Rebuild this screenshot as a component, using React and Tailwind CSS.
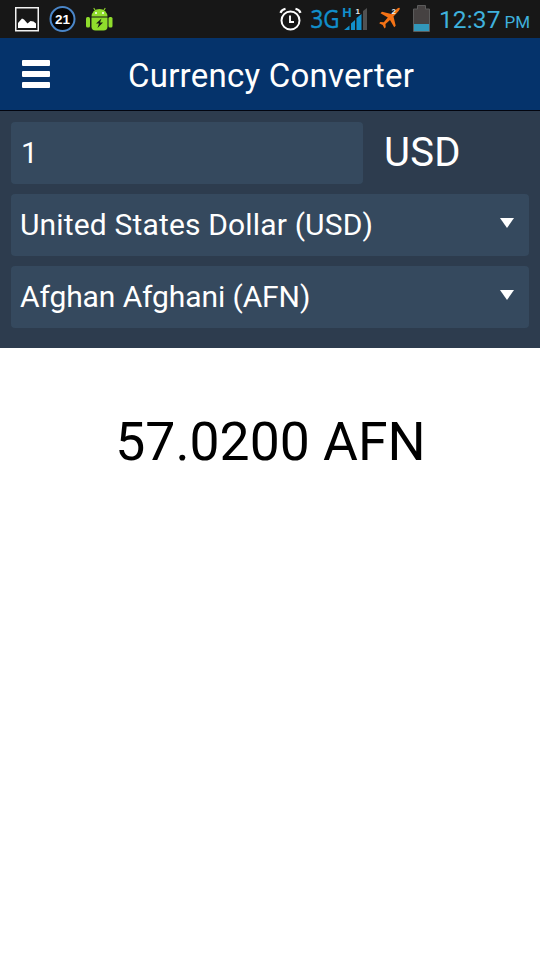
import clsx from 'clsx';

const selects = [
  { label: 'United States Dollar (USD)', spacing: 'tracking-[0.16px]' },
  { label: 'Afghan Afghani (AFN)', spacing: 'tracking-[-0.1px]' },
];

export default function App() {
  return (
    <div className="flex h-[960px] w-[540px] flex-col overflow-hidden bg-white font-['Roboto','Liberation_Sans',sans-serif] text-white">
      <StatusBar />

      {/* Title bar */}
      <header className="flex h-[73px] items-center border-b border-[#02050f] bg-[#05336b]">
        <button aria-label="Menu" className="ml-[22px] flex w-7 flex-col gap-[5px]">
          <span className="h-1.5 rounded-[1px] bg-white" />
          <span className="h-1.5 rounded-[1px] bg-white" />
          <span className="h-1.5 rounded-[1px] bg-white" />
        </button>
        <h1 className="ml-[78px] mt-[3px] whitespace-nowrap text-[33px] leading-[70px] tracking-[0.25px]">Currency Converter</h1>
      </header>

      {/* Amount and currencies */}
      <main>
        <section className="flex h-[237px] flex-col gap-2.5 bg-[#2d3c4e] px-[11px] pt-[11px]">
          <div className="flex h-[62px] items-center">
            <div className="flex h-full w-[352px] items-center rounded bg-[#35495e] pb-0.5 pl-[10px] text-[30px]">1</div>
            <span className="ml-[21px] text-[40px] leading-none tracking-[0.3px]">USD</span>
          </div>
          {selects.map(({ label, spacing }) => (
            <button key={label} className="flex h-[62px] items-center justify-between rounded bg-[#35495e] pl-[9px] pr-[15px] text-left">
              <span className={clsx('whitespace-nowrap text-[30px] leading-none', spacing)}>{label}</span>
              <svg className="mb-1 h-2.5 w-[14px]" viewBox="0 0 14 10" fill="currentColor">
                <path d="M0 0h14L7 10z" />
              </svg>
            </button>
          ))}
        </section>

        <p className="pl-px pt-[66px] text-center text-[53.500px] leading-[56px] text-black">57.0200 AFN</p>
      </main>
    </div>
  );
}

function StatusBar() {
  return (
    <div className="flex h-[38px] shrink-0 items-start bg-[#171717]">
      {/* Gallery */}
      <svg className="ml-[15px] mt-[7px] h-[25px] w-[24px]" viewBox="0 0 24 25">
        <rect x=".75" y=".75" width="22.5" height="23" fill="none" stroke="#f2f2f2" strokeWidth="1.5" />
        <path d="M3 21v-5l4-4.500 2 1 3.500 4 3-2.500 3 .5 2.500 2v4.500z" fill="#fff" />
      </svg>

      {/* Battery percentage */}
      <svg className="ml-[10px] mt-[6px] size-[27px]" viewBox="0 0 27 27">
        <circle cx="13.500" cy="13" r="12" fill="#050505" stroke="#4a86c8" strokeWidth="2" />
        <text x="13.500" y="17.800" textAnchor="middle" fontFamily="Liberation Sans" fontSize="13.5" fontWeight="700" fill="#fff">21</text>
      </svg>

      {/* Android */}
      <svg className="ml-[10px] mt-[7px] h-[25px] w-[27px]" viewBox="0 0 27 25">
        <path d="M8 1.500l2 3M19 1.500l-2 3" stroke="#8fd32c" strokeWidth="1.200" strokeLinecap="round" />
        <path d="M5.500 9.500a8 7.500 0 0 1 16 0z" fill="#8fdc2c" />
        <rect x="0" y="10" width="4" height="10.500" rx="1.500" fill="#8fdc2c" />
        <rect x="22.500" y="10" width="4" height="10.500" rx="1.500" fill="#8fdc2c" />
        <path d="M5.500 10.500h16v9a4 4 0 0 1-4 4h-8a4 4 0 0 1-4-4z" fill="#8fdc2c" />
        <circle cx="10" cy="6" r="1" fill="#fff" />
        <circle cx="17" cy="6" r="1" fill="#fff" />
        <path d="M15.500 11.500l-5.500 5h3l-1.500 4.500 5.500-5.500h-3z" fill="#171717" />
      </svg>

      {/* Alarm */}
      <svg className="ml-[166px] mt-[7px] h-[25px] w-[23px]" viewBox="0 0 23 25" fill="none" stroke="#fff">
        <circle cx="11.500" cy="13.500" r="9" strokeWidth="2" />
        <path d="M1.500 5.800q1-3 5-4M21.500 5.800q-1-3-5-4" strokeWidth="2.200" />
        <path d="M11 8.500V15h4" strokeWidth="1.900" />
      </svg>

      {/* Mobile signal */}
      <svg className="ml-[8px] mt-[2px] h-[31px] w-[58px] overflow-visible" viewBox="0 -3 58 31">
        <text x="0.5" y="22.500" fontFamily="Open Sans" fontSize="25" textLength="29" lengthAdjust="spacingAndGlyphs" fill="#118fcb" stroke="#118fcb" strokeWidth=".4">3G</text>
        <text x="32" y="11.500" fontFamily="Open Sans" fontSize="13" fontWeight="700" fill="#118fcb">H</text>
        <path d="M34 25l5.500-4.500V25zM41 25v-6.500l4-3.500v10zM46.500 25V13l5-4v16z" fill="#118fcb" />
        <path d="M53 25V6l4-3v22z" fill="#515151" />
        <text x="45.5" y="8.5" fontFamily="Liberation Sans" fontSize="8" fontWeight="700" fill="#eee">1</text>
      </svg>

      {/* Airplane mode */}
      <svg className="ml-[11px] mt-[7px] h-[22px] w-[22px]" viewBox="0 0 22 22">
        <path d="M20.800 1q.4.9-1.200 3L14.500 9.500l2.200 9.200-1.500 1.600-4.200-7.300-4.500 4 .2 3.200-1.200 1.300-1.800-3.600-3.500-1.700 1.200-1.200 3.400.2 4-4.600-7.300-4.300 1.500-1.500 9.300 2.200L18 1.700q1.800-1.300 2.800-.7z" fill="#f57316" />
        <text x="12.500" y="6.500" fontFamily="Liberation Sans" fontSize="8" fontWeight="700" fill="#eee">2</text>
      </svg>

      {/* Battery */}
      <svg className="ml-[12px] mt-[5px] h-[27px] w-[17px]" viewBox="0 0 17 27">
        <path d="M.5 4h4V.5h8V4h4v22.500H.5z" fill="#464242" stroke="#5b5b5b" />
        <path d="M1 19h15v7H1z" fill="#3298bb" />
      </svg>

      <span className="ml-[9px] mt-[5px] whitespace-nowrap text-[24.500px] leading-[30px] tracking-[0.1px] text-[#3fb1dc]">12:37</span>
      <span className="ml-[4px] mt-[13px] whitespace-nowrap text-[17px] leading-[18px] text-[#3fb1dc]">PM</span>
    </div>
  );
}
